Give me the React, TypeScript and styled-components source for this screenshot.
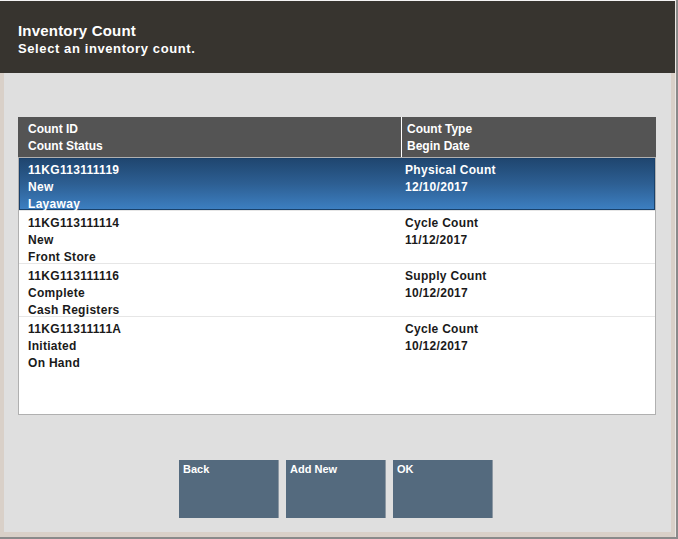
import React from "react";
import styled, { createGlobalStyle } from "styled-components";

const Global = createGlobalStyle`
  html, body { margin: 0; padding: 0; background: #8a8a8a; }
  body { font-family: "Liberation Sans", Arial, sans-serif; }
`;

const Frame = styled.div`
  width: 678px;
  height: 539px;
  box-sizing: border-box;
  padding: 0 2px 2px 0;
  background: #8a8a8a;
  display: flex;
`;

const Window = styled.div`
  flex: 1;
  display: flex;
  flex-direction: column;
  border-top: 1px solid #f4f4f4;
  border-right: 1px solid #ebe7e3;
  background: #dfdfdf;
`;

const Header = styled.header`
  height: 72px;
  box-sizing: border-box;
  background: #37342f;
  color: #ffffff;
  padding: 20px 18px 0;
`;

const Title = styled.div`
  font-size: 15px;
  font-weight: 700;
  line-height: 19px;
  letter-spacing: 0.2px;
`;

const Subtitle = styled.div`
  font-size: 13px;
  font-weight: 700;
  line-height: 17px;
  letter-spacing: 0.6px;
`;

const Body = styled.main`
  flex: 1;
  display: flex;
  flex-direction: column;
  padding: 44px 15px 0 14px;
  border-left: 4px solid #d9d0c8;
  border-right: 4px solid #d9d0c8;
  border-bottom: 5px solid #d9d0c8;
`;

const TableHead = styled.div`
  display: grid;
  grid-template-columns: 383px 1fr;
  height: 40px;
  background: #545454;
  color: #ffffff;
`;

const HeadCell = styled.div`
  padding: 4px 0 0 10px;
  font-size: 12px;
  font-weight: 700;
  line-height: 17px;
  & + & {
    border-left: 1px solid #ffffff;
    padding-left: 5px;
  }
`;

const List = styled.div`
  height: 258px;
  box-sizing: border-box;
  background: #ffffff;
  border: 1px solid #b0b0b0;
`;

const Row = styled.div<{ $selected?: boolean }>`
  display: grid;
  grid-template-columns: 382px 1fr;
  height: 53px;
  box-sizing: border-box;
  border-bottom: 1px solid #e6e6e6;
  color: ${(p) => (p.$selected ? "#ffffff" : "#1a1a1a")};
  background: ${(p) =>
    p.$selected ? "linear-gradient(to bottom, #1f456e 0%, #2d5f93 50%, #3d80c3 100%)" : "#ffffff"};
  box-shadow: ${(p) => (p.$selected ? "inset 0 0 0 1px #19416b" : "none")};
  &:last-child {
    border-bottom: none;
  }
`;

const Cell = styled.div<{ $second?: boolean }>`
  padding: 4px 0 0 ${(p) => (p.$second ? "4px" : "9px")};
  font-size: 12px;
  font-weight: 700;
  line-height: 17px;
  letter-spacing: 0.3px;
`;

const ButtonRow = styled.div`
  display: flex;
  justify-content: center;
  gap: 7px;
  margin-top: 45px;
  padding-right: 2px;
`;

const ActionButton = styled.button`
  width: 100px;
  height: 58px;
  box-sizing: border-box;
  background: #546a7e;
  border: none;
  border-right: 1px solid #8d98a3;
  color: #ffffff;
  font-family: "Liberation Sans", Arial, sans-serif;
  font-size: 11px;
  font-weight: 700;
  line-height: 14px;
  text-align: left;
  padding: 2px 4px;
  display: flex;
  align-items: flex-start;
  cursor: pointer;
`;

const counts = [
  { id: "11KG113111119", status: "New", loc: "Layaway", type: "Physical Count", date: "12/10/2017" },
  { id: "11KG113111114", status: "New", loc: "Front Store", type: "Cycle Count", date: "11/12/2017" },
  { id: "11KG113111116", status: "Complete", loc: "Cash Registers", type: "Supply Count", date: "10/12/2017" },
  { id: "11KG11311111A", status: "Initiated", loc: "On Hand", type: "Cycle Count", date: "10/12/2017" },
];

export default function App() {
  return (
    <>
      <Global />
      <Frame>
        <Window>
          <Header>
            <Title>Inventory Count</Title>
            <Subtitle>Select an inventory count.</Subtitle>
          </Header>
          <Body>
            <TableHead>
              <HeadCell>
                Count ID
                <br />
                Count Status
              </HeadCell>
              <HeadCell>
                Count Type
                <br />
                Begin Date
              </HeadCell>
            </TableHead>
            <List>
              {counts.map((c, i) => (
                <Row key={c.id} $selected={i === 0}>
                  <Cell>
                    {c.id}
                    <br />
                    {c.status}
                    <br />
                    {c.loc}
                  </Cell>
                  <Cell $second>
                    {c.type}
                    <br />
                    {c.date}
                  </Cell>
                </Row>
              ))}
            </List>
            <ButtonRow>
              <ActionButton>Back</ActionButton>
              <ActionButton>Add New</ActionButton>
              <ActionButton>OK</ActionButton>
            </ButtonRow>
          </Body>
        </Window>
      </Frame>
    </>
  );
}
